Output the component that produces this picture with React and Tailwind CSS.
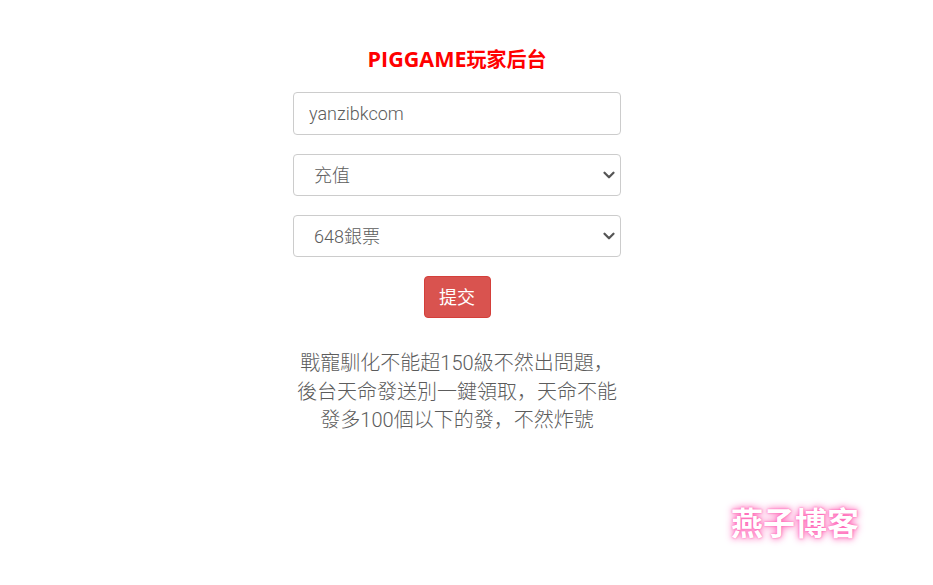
import { ChevronDown } from "lucide-react";

function Select({ value }) {
  return (
    <div className="relative mt-[19px] h-[42px] w-full">
      <select
        defaultValue={value}
        className="h-full w-full appearance-none rounded-[4px] border border-[#cccccc] bg-white pr-[30px] pl-[20px] text-[18px] font-light text-[#5c5c5c] outline-none"
      >
        <option>{value}</option>
      </select>
      <ChevronDown
        size={18}
        strokeWidth={3}
        className="pointer-events-none absolute top-[12px] right-[3px] text-[#555555]"
      />
    </div>
  );
}

export default function App() {
  const font = "font-['Roboto','Noto_Sans_CJK_SC','Noto_Sans_CJK_TC',sans-serif]";
  return (
    <div className={`relative h-[585px] w-[933px] overflow-hidden bg-white ${font}`}>
      <div className="flex w-[914px] flex-col items-center pt-[45px]">
        <h1 className="h-[28px] font-['Open_Sans','Noto_Sans_CJK_SC',sans-serif] text-[20px] leading-[28px] font-bold text-[#ff0000]">
          <span className="text-[21.5px]">PIGGAME</span>玩家后台
        </h1>
        <form className="mt-[19px] flex w-[328px] flex-col items-center">
          <input
            readOnly
            value="yanzibkcom"
            className="h-[43px] w-full rounded-[4px] border border-[#cccccc] bg-white px-[15px] text-[18px] font-light text-[#5c5c5c] outline-none"
          />
          <Select value="充值" />
          <Select value="648銀票" />
          <button
            type="button"
            className="mt-[19px] h-[42px] w-[67px] rounded-[4px] border border-[#d43f3a] bg-[#d9534f] text-[18px] font-normal text-white"
          >
            提交
          </button>
          <p className="mt-[31px] w-[328px] text-center text-[20px] leading-[28.5px] font-light text-[#5c5c5c]">
            戰寵馴化不能超150級不然出問題，
            <br />
            後台天命發送別一鍵領取，天命不能
            <br />
            發多100個以下的發，不然炸號
          </p>
        </form>
      </div>
      <div className="absolute top-[503px] left-[731px] text-[32px] leading-[42px] font-bold text-white [text-shadow:0_0_2px_#ff4fa8,0_0_6px_#ff6fbc,0_0_10px_#ff9ad2]">
        燕子博客
      </div>
    </div>
  );
}
